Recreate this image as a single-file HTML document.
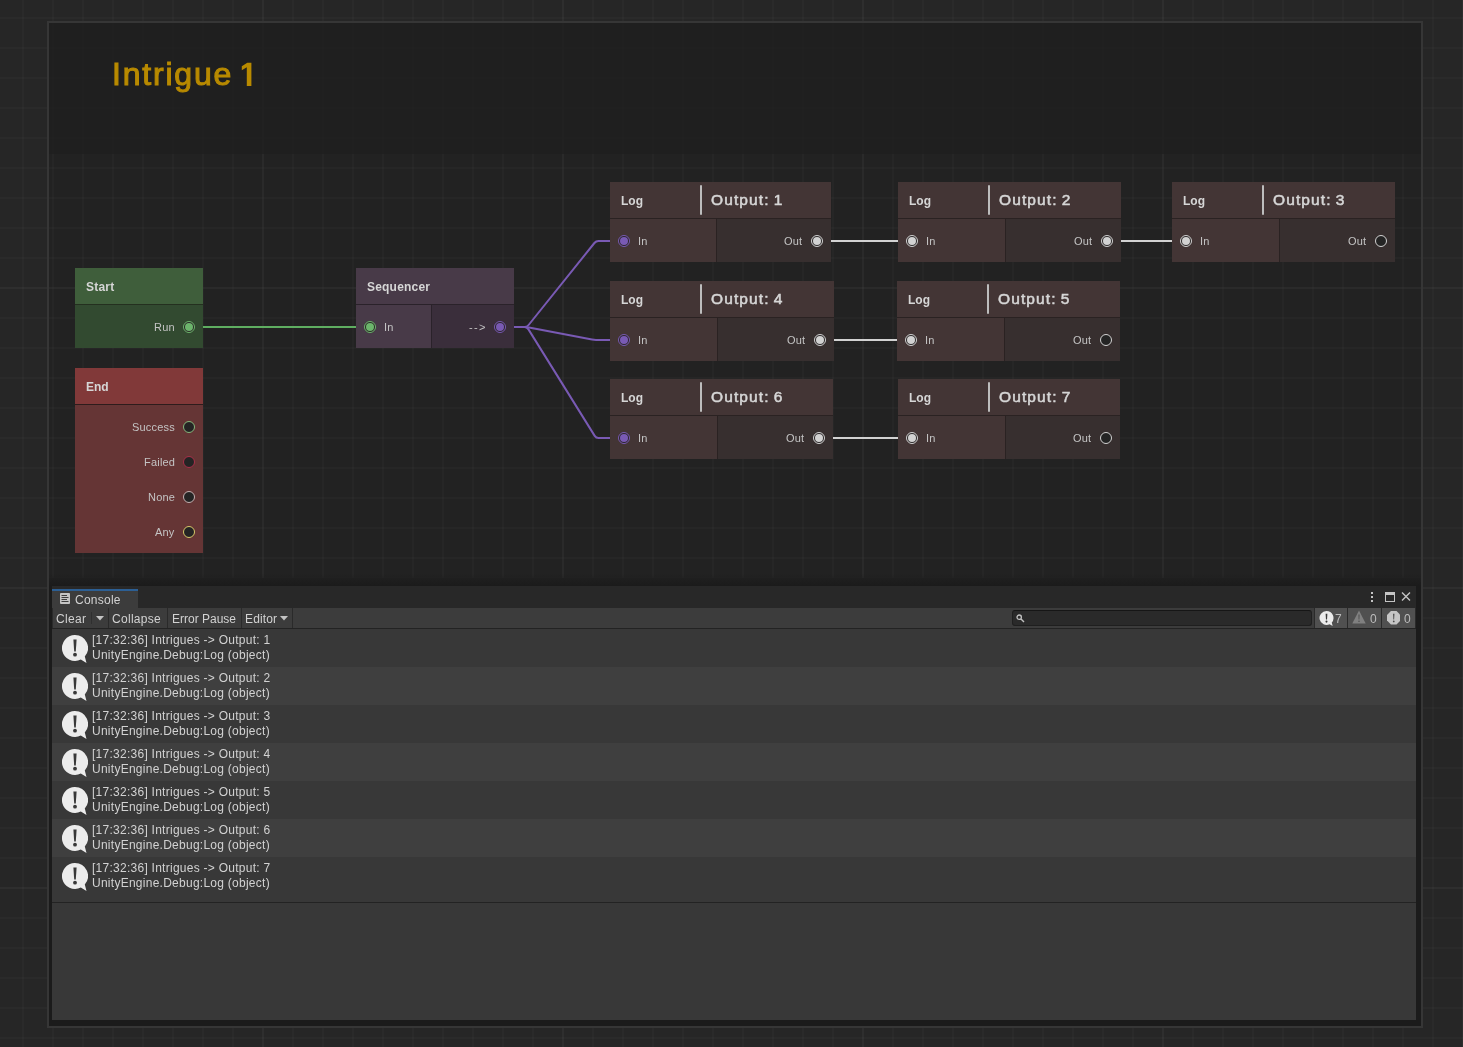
<!DOCTYPE html>
<html><head><meta charset="utf-8"><title>Intrigue 1</title>
<style>
*{margin:0;padding:0;box-sizing:border-box}
html,body{width:1463px;height:1047px;overflow:hidden;background:#262626}
body{position:relative;font-family:"Liberation Sans",sans-serif;color:#c8c8c8}
.abs,.abs *{position:absolute}
#grid{left:0;top:0;width:1463px;height:1047px;
 background-image:
  linear-gradient(to right,rgba(255,255,255,.020) 2px,transparent 2px),
  linear-gradient(to bottom,rgba(255,255,255,.020) 2px,transparent 2px),
  linear-gradient(to right,rgba(255,255,255,.020) 2px,transparent 2px),
  linear-gradient(to bottom,rgba(255,255,255,.020) 2px,transparent 2px);
 background-size:300px 300px,300px 300px,30px 30px,30px 30px;
 background-position:262px 0,0 287px,22px 0,0 17px;}
#group{left:47px;top:21px;width:1376px;height:1007px;border:2px solid #363636;background:rgba(0,0,0,.085)}
#ghead{left:49px;top:23px;width:1372px;height:130.5px;background:rgba(31,31,31,.86)}
#gtitle{will-change:transform;left:112.300px;top:51px;word-spacing:-3.500px;font-size:30.500px;font-weight:normal;color:#b88a00;-webkit-text-stroke:1px #b88a00;line-height:46px;white-space:nowrap;letter-spacing:1.700px;transform:scaleX(1.05);transform-origin:0 0}
.node{left:0;top:0;width:1463px;height:1047px}
.t{white-space:nowrap;will-change:transform}
.hd{font-weight:bold;font-size:12px;color:#d6d6d6;line-height:36px;margin-top:1px;letter-spacing:.2px}
.pl{font-size:11px;color:#c4c4c4;line-height:14px;letter-spacing:.2px}
.port{width:12px;height:12px;border-radius:50%;border:1px solid #ccc}
#shadow{left:49px;top:574px;width:1372px;height:452px;background:linear-gradient(to bottom,rgba(31,31,31,0) 0,rgba(31,31,31,.35) 3.500px,#1f1f1f 4.500px,#1b1b1b 12px)}
#con{left:52px;top:586px;width:1364px;height:434px;overflow:hidden}
.ct{font-size:12px;color:#d2d2d2;line-height:14px}
.port i{left:1px;top:1px;width:8px;height:8px;border-radius:50%;display:block}
</style></head>
<body>
<div id="grid" class="abs"></div>
<div id="group" class="abs"></div>
<div id="ghead" class="abs"></div>
<div id="gtitle" class="abs t">Intrigue</div>
<svg class="abs" style="left:238px;top:58px" width="18" height="32" viewBox="238 58 18 32"><path d="M251.400 62.800H247.300L241.800 66.200V70.200L246.800 67.200V86H251.400Z" fill="#b88a00"/></svg>
<svg class="abs" style="left:0;top:0" width="1463" height="1047" viewBox="0 0 1463 1047" fill="none" stroke-width="2" stroke-linejoin="round">
<path d="M203 327H356" stroke="#5fae61"/>
<path d="M514 327H524.500Q527 327 528.600 325L594.400 243Q596 241 598.500 241H610" stroke="#795ab4"/>
<path d="M514 327H525Q527 327 529 327.400L592 339.600Q594 340 596 340H610" stroke="#795ab4"/>
<path d="M514 327H524.500Q527 327 528.300 329.100L594.700 435.900Q596 438 598.500 438H610" stroke="#795ab4"/>
<path d="M831 241H898M1121 241H1172M834 340H897M833 438H898" stroke="#d2d2d2"/>
</svg>
<div class="abs node"><div style="left:75px;top:268px;width:128px;height:36px;background:#3f5e3b"></div><div style="left:75px;top:304px;width:128px;height:1px;background:#24301f"></div><div style="left:75px;top:305px;width:128px;height:43px;background:#324a30"></div><div class="t hd" style="left:86px;top:268px;">Start</div><div class="t pl" style="right:1288px;top:320px;">Run</div><div class="port" style="left:183px;top:321px;border-color:#6cb56c;background:#2a2627"><i style="background:#6cb56c"></i></div></div>
<div class="abs node"><div style="left:75px;top:368px;width:128px;height:36px;background:#813939"></div><div style="left:75px;top:404px;width:128px;height:1px;background:#2e1c1c"></div><div style="left:75px;top:405px;width:128px;height:148px;background:#653535"></div><div class="t hd" style="left:86px;top:368px;letter-spacing:-.100px">End</div><div class="t pl" style="right:1288px;top:420px;">Success</div><div class="port" style="left:183px;top:421px;border-color:#86b67c;background:#242424"></div><div class="t pl" style="right:1288px;top:455px;">Failed</div><div class="port" style="left:183px;top:456px;border-color:#a8304a;background:#242424"></div><div class="t pl" style="right:1288px;top:490px;">None</div><div class="port" style="left:183px;top:491px;border-color:#c4b0b0;background:#242424"></div><div class="t pl" style="right:1288px;top:525px;">Any</div><div class="port" style="left:183px;top:526px;border-color:#d6c86a;background:#242424"></div></div>
<div class="abs node"><div style="left:356px;top:268px;width:158px;height:36px;background:#483a48"></div><div style="left:356px;top:304px;width:158px;height:1px;background:#2a222a"></div><div style="left:356px;top:305px;width:75px;height:43px;background:#483a48"></div><div style="left:431px;top:305px;width:1px;height:43px;background:#2a222a"></div><div style="left:432px;top:305px;width:82px;height:43px;background:#3a2e3b"></div><div class="t hd" style="left:367px;top:268px;">Sequencer</div><div class="port" style="left:364px;top:321px;border-color:#6cb56c;background:#2a2627"><i style="background:#6cb56c"></i></div><div class="t pl" style="left:384px;top:320px;">In</div><div class="t pl" style="right:978px;top:320px;letter-spacing:1.300px;margin-right:-1.300px">--&gt;</div><div class="port" style="left:494px;top:321px;border-color:#795ab4;background:#2a2627"><i style="background:#795ab4"></i></div></div>
<div class="abs node"><div style="left:610px;top:182px;width:221px;height:36px;background:#433535"></div><div style="left:610px;top:218px;width:221px;height:1px;background:#2a2222"></div><div style="left:610px;top:219px;width:106px;height:43px;background:#433535"></div><div style="left:716px;top:219px;width:1px;height:43px;background:#2a2222"></div><div style="left:717px;top:219px;width:114px;height:43px;background:#372f2f"></div><div class="t hd" style="left:621px;top:182px;letter-spacing:0">Log</div><div style="left:700px;top:185px;width:2px;height:30px;background:#bdbdbd;border-radius:1px"></div><div class="t hd" style="left:710px;top:182px;font-size:15.500px;letter-spacing:1.100px;word-spacing:-1.300px;margin-top:0;left:710.5px;font-weight:normal;-webkit-text-stroke:.55px #d6d6d6">Output: 1</div><div class="port" style="left:618px;top:235px;border-color:#795ab4;background:#2a2627"><i style="background:#795ab4"></i></div><div class="t pl" style="left:638px;top:234px;">In</div><div class="t pl" style="right:660.7px;top:234px;">Out</div><div class="port" style="left:811px;top:235px;border-color:#d2d2d2;background:#2a2627"><i style="background:#d2d2d2"></i></div></div>
<div class="abs node"><div style="left:898px;top:182px;width:223px;height:36px;background:#433535"></div><div style="left:898px;top:218px;width:223px;height:1px;background:#2a2222"></div><div style="left:898px;top:219px;width:107px;height:43px;background:#433535"></div><div style="left:1005px;top:219px;width:1px;height:43px;background:#2a2222"></div><div style="left:1006px;top:219px;width:115px;height:43px;background:#372f2f"></div><div class="t hd" style="left:909px;top:182px;letter-spacing:0">Log</div><div style="left:988px;top:185px;width:2px;height:30px;background:#bdbdbd;border-radius:1px"></div><div class="t hd" style="left:998px;top:182px;font-size:15.500px;letter-spacing:1.100px;word-spacing:-1.300px;margin-top:0;left:998.5px;font-weight:normal;-webkit-text-stroke:.55px #d6d6d6">Output: 2</div><div class="port" style="left:906px;top:235px;border-color:#d2d2d2;background:#2a2627"><i style="background:#d2d2d2"></i></div><div class="t pl" style="left:926px;top:234px;">In</div><div class="t pl" style="right:370.70000000000005px;top:234px;">Out</div><div class="port" style="left:1101px;top:235px;border-color:#d2d2d2;background:#2a2627"><i style="background:#d2d2d2"></i></div></div>
<div class="abs node"><div style="left:1172px;top:182px;width:223px;height:36px;background:#433535"></div><div style="left:1172px;top:218px;width:223px;height:1px;background:#2a2222"></div><div style="left:1172px;top:219px;width:107px;height:43px;background:#433535"></div><div style="left:1279px;top:219px;width:1px;height:43px;background:#2a2222"></div><div style="left:1280px;top:219px;width:115px;height:43px;background:#372f2f"></div><div class="t hd" style="left:1183px;top:182px;letter-spacing:0">Log</div><div style="left:1262px;top:185px;width:2px;height:30px;background:#bdbdbd;border-radius:1px"></div><div class="t hd" style="left:1272px;top:182px;font-size:15.500px;letter-spacing:1.100px;word-spacing:-1.300px;margin-top:0;left:1272.5px;font-weight:normal;-webkit-text-stroke:.55px #d6d6d6">Output: 3</div><div class="port" style="left:1180px;top:235px;border-color:#d2d2d2;background:#2a2627"><i style="background:#d2d2d2"></i></div><div class="t pl" style="left:1200px;top:234px;">In</div><div class="t pl" style="right:96.70000000000005px;top:234px;">Out</div><div class="port" style="left:1375px;top:235px;border-color:#d2d2d2;background:#242424"></div></div>
<div class="abs node"><div style="left:610px;top:281px;width:224px;height:36px;background:#433535"></div><div style="left:610px;top:317px;width:224px;height:1px;background:#2a2222"></div><div style="left:610px;top:318px;width:107px;height:43px;background:#433535"></div><div style="left:717px;top:318px;width:1px;height:43px;background:#2a2222"></div><div style="left:718px;top:318px;width:116px;height:43px;background:#372f2f"></div><div class="t hd" style="left:621px;top:281px;letter-spacing:0">Log</div><div style="left:700px;top:284px;width:2px;height:30px;background:#bdbdbd;border-radius:1px"></div><div class="t hd" style="left:710px;top:281px;font-size:15.500px;letter-spacing:1.100px;word-spacing:-1.300px;margin-top:0;left:710.5px;font-weight:normal;-webkit-text-stroke:.55px #d6d6d6">Output: 4</div><div class="port" style="left:618px;top:334px;border-color:#795ab4;background:#2a2627"><i style="background:#795ab4"></i></div><div class="t pl" style="left:638px;top:333px;">In</div><div class="t pl" style="right:657.7px;top:333px;">Out</div><div class="port" style="left:814px;top:334px;border-color:#d2d2d2;background:#2a2627"><i style="background:#d2d2d2"></i></div></div>
<div class="abs node"><div style="left:897px;top:281px;width:223px;height:36px;background:#433535"></div><div style="left:897px;top:317px;width:223px;height:1px;background:#2a2222"></div><div style="left:897px;top:318px;width:107px;height:43px;background:#433535"></div><div style="left:1004px;top:318px;width:1px;height:43px;background:#2a2222"></div><div style="left:1005px;top:318px;width:115px;height:43px;background:#372f2f"></div><div class="t hd" style="left:908px;top:281px;letter-spacing:0">Log</div><div style="left:987px;top:284px;width:2px;height:30px;background:#bdbdbd;border-radius:1px"></div><div class="t hd" style="left:997px;top:281px;font-size:15.500px;letter-spacing:1.100px;word-spacing:-1.300px;margin-top:0;left:997.5px;font-weight:normal;-webkit-text-stroke:.55px #d6d6d6">Output: 5</div><div class="port" style="left:905px;top:334px;border-color:#d2d2d2;background:#2a2627"><i style="background:#d2d2d2"></i></div><div class="t pl" style="left:925px;top:333px;">In</div><div class="t pl" style="right:371.70000000000005px;top:333px;">Out</div><div class="port" style="left:1100px;top:334px;border-color:#d2d2d2;background:#242424"></div></div>
<div class="abs node"><div style="left:610px;top:379px;width:223px;height:36px;background:#433535"></div><div style="left:610px;top:415px;width:223px;height:1px;background:#2a2222"></div><div style="left:610px;top:416px;width:107px;height:43px;background:#433535"></div><div style="left:717px;top:416px;width:1px;height:43px;background:#2a2222"></div><div style="left:718px;top:416px;width:115px;height:43px;background:#372f2f"></div><div class="t hd" style="left:621px;top:379px;letter-spacing:0">Log</div><div style="left:700px;top:382px;width:2px;height:30px;background:#bdbdbd;border-radius:1px"></div><div class="t hd" style="left:710px;top:379px;font-size:15.500px;letter-spacing:1.100px;word-spacing:-1.300px;margin-top:0;left:710.5px;font-weight:normal;-webkit-text-stroke:.55px #d6d6d6">Output: 6</div><div class="port" style="left:618px;top:432px;border-color:#795ab4;background:#2a2627"><i style="background:#795ab4"></i></div><div class="t pl" style="left:638px;top:431px;">In</div><div class="t pl" style="right:658.7px;top:431px;">Out</div><div class="port" style="left:813px;top:432px;border-color:#d2d2d2;background:#2a2627"><i style="background:#d2d2d2"></i></div></div>
<div class="abs node"><div style="left:898px;top:379px;width:222px;height:36px;background:#433535"></div><div style="left:898px;top:415px;width:222px;height:1px;background:#2a2222"></div><div style="left:898px;top:416px;width:107px;height:43px;background:#433535"></div><div style="left:1005px;top:416px;width:1px;height:43px;background:#2a2222"></div><div style="left:1006px;top:416px;width:114px;height:43px;background:#372f2f"></div><div class="t hd" style="left:909px;top:379px;letter-spacing:0">Log</div><div style="left:988px;top:382px;width:2px;height:30px;background:#bdbdbd;border-radius:1px"></div><div class="t hd" style="left:998px;top:379px;font-size:15.500px;letter-spacing:1.100px;word-spacing:-1.300px;margin-top:0;left:998.5px;font-weight:normal;-webkit-text-stroke:.55px #d6d6d6">Output: 7</div><div class="port" style="left:906px;top:432px;border-color:#d2d2d2;background:#2a2627"><i style="background:#d2d2d2"></i></div><div class="t pl" style="left:926px;top:431px;">In</div><div class="t pl" style="right:371.70000000000005px;top:431px;">Out</div><div class="port" style="left:1100px;top:432px;border-color:#d2d2d2;background:#242424"></div></div>
<div id="shadow" class="abs"></div>
<div id="con" class="abs">
<div style="left:0px;top:0px;width:1364px;height:22px;background:#282828"></div><div style="left:0px;top:3px;width:86px;height:19px;background:#3c3c3c"></div><div style="left:0px;top:3px;width:86px;height:2px;background:#2c5f94"></div><svg style="left:8px;top:7px" width="11" height="11" viewBox="0 0 11 11"><rect x="0" y="0" width="10" height="11" rx="1" fill="#c4c4c4"/><path d="M1.5 2.5H7M1.5 4.5H8.5M1.5 6.5H7M1.5 8.5H8.5" stroke="#3c3c3c" stroke-width="1"/></svg><div class="t ct" style="left:23px;top:7px;letter-spacing:.250px">Console</div><svg style="left:1316px;top:5px" width="44" height="12" viewBox="0 0 44 12" fill="#c4c4c4"><rect x="3" y="1" width="2" height="2"/><rect x="3" y="5" width="2" height="2"/><rect x="3" y="9" width="2" height="2"/><path d="M17 1h10v10h-10z M18 4v6h8v-6z" fill-rule="evenodd"/><path d="M34 1.5L42 9.500M42 1.500L34 9.500" stroke="#c4c4c4" stroke-width="1.4" fill="none"/></svg><div style="left:0px;top:22px;width:1364px;height:20px;background:#3c3c3c"></div><div style="left:0px;top:42px;width:1364px;height:1px;background:#232323"></div><div style="left:56px;top:22px;width:1px;height:20px;background:#2a2a2a"></div><div style="left:115px;top:22px;width:1px;height:20px;background:#2a2a2a"></div><div style="left:189px;top:22px;width:1px;height:20px;background:#2a2a2a"></div><div style="left:240px;top:22px;width:1px;height:20px;background:#2a2a2a"></div><div style="left:39px;top:26px;width:1px;height:12px;background:#2f2f2f"></div><div style="left:0px;top:22px;width:1px;height:20px;background:#2a2a2a"></div><div class="t ct" style="left:4px;top:26px;letter-spacing:.300px">Clear</div><div class="t ct" style="left:60px;top:26px;letter-spacing:.300px">Collapse</div><div class="t ct" style="left:120px;top:26px;">Error Pause</div><div class="t ct" style="left:193px;top:26px;letter-spacing:.150px">Editor</div><svg style="left:44px;top:30px" width="8" height="5"><path d="M0 0H8L4 4.500z" fill="#c4c4c4"/></svg><svg style="left:228px;top:30px" width="8" height="5"><path d="M0 0H8L4 4.500z" fill="#c4c4c4"/></svg><div style="left:960px;top:24px;width:300px;height:16px;background:#2a2a2a;border:1px solid #1f1f1f;border-top-color:#161616;border-radius:3px"></div><svg style="left:964px;top:28px" width="9" height="9" viewBox="0 0 9 9" fill="none" stroke="#c0c0c0"><circle cx="3.200" cy="3.200" r="2.200" stroke-width="1.300"/><path d="M5 5L8 8" stroke-width="1.400"/></svg><div style="left:1263px;top:22px;width:32px;height:20px;background:#505050"></div><div style="left:1296px;top:22px;width:33px;height:20px;background:#505050"></div><div style="left:1330px;top:22px;width:33px;height:20px;background:#505050"></div><div style="left:1262px;top:22px;width:1px;height:20px;background:#2a2a2a"></div><div style="left:1295px;top:22px;width:1px;height:20px;background:#2a2a2a"></div><div style="left:1329px;top:22px;width:1px;height:20px;background:#2a2a2a"></div><div style="left:1363px;top:22px;width:1px;height:20px;background:#2a2a2a"></div><svg style="left:1267px;top:25px" width="15" height="15" viewBox="0 0 26 28"><g fill="#ececec"><path d="M13 0a13 13 0 1 0 5.800 24.600L24.500 28l-1.700-6.500A13 13 0 0 0 13 0z"/></g><path d="M11.400 5h3.200l-.6 11h-2z" fill="#3a3a3a"/><circle cx="13" cy="19.800" r="1.900" fill="#3a3a3a"/></svg><div class="t ct" style="left:1283px;top:26px;color:#bdbdbd">7</div><svg style="left:1300.300px;top:24px" width="14" height="14" viewBox="0 0 14 14"><path d="M7 .5L13.700 13.500H.3z" fill="#808080"/><path d="M6.400 4.500h1.200l-.2 5h-.8z" fill="#505050"/><circle cx="7" cy="11.200" r=".8" fill="#505050"/></svg><div class="t ct" style="left:1317.8px;top:26px;color:#bdbdbd">0</div><svg style="left:1334.500px;top:25px" width="13.500" height="13.500" viewBox="0 0 14 14"><path d="M4.100 0h5.800L14 4.100v5.800L9.900 14H4.100L0 9.900V4.100z" fill="#c6c6c6"/><path d="M6.300 2.800h1.400l-.3 6h-.8z" fill="#4a4a4a"/><circle cx="7" cy="10.800" r=".9" fill="#4a4a4a"/></svg><div class="t ct" style="left:1351.8px;top:26px;color:#bdbdbd">0</div><div style="left:0px;top:43px;width:1364px;height:38px;background:#383838"></div><svg style="left:10px;top:49px" width="26" height="29" viewBox="0 0 26 29"><g fill="#ececec"><path d="M13 0a13 13 0 1 0 5.800 24.600L24.500 28l-1.700-6.500A13 13 0 0 0 13 0z"/></g><path d="M11.400 4.600h3.200l-.8 11.800h-1.600z" fill="#383838"/><circle cx="13" cy="19.700" r="1.900" fill="#383838"/></svg><div class="t ct" style="left:40px;top:47px;letter-spacing:.260px">[17:32:36] Intrigues -&gt; Output: 1</div><div class="t ct" style="left:40px;top:62px;letter-spacing:.260px">UnityEngine.Debug:Log (object)</div><div style="left:0px;top:81px;width:1364px;height:38px;background:#3f3f3f"></div><svg style="left:10px;top:87px" width="26" height="29" viewBox="0 0 26 29"><g fill="#ececec"><path d="M13 0a13 13 0 1 0 5.800 24.600L24.500 28l-1.700-6.500A13 13 0 0 0 13 0z"/></g><path d="M11.400 4.600h3.200l-.8 11.800h-1.600z" fill="#383838"/><circle cx="13" cy="19.700" r="1.900" fill="#383838"/></svg><div class="t ct" style="left:40px;top:85px;letter-spacing:.260px">[17:32:36] Intrigues -&gt; Output: 2</div><div class="t ct" style="left:40px;top:100px;letter-spacing:.260px">UnityEngine.Debug:Log (object)</div><div style="left:0px;top:119px;width:1364px;height:38px;background:#383838"></div><svg style="left:10px;top:125px" width="26" height="29" viewBox="0 0 26 29"><g fill="#ececec"><path d="M13 0a13 13 0 1 0 5.800 24.600L24.500 28l-1.700-6.500A13 13 0 0 0 13 0z"/></g><path d="M11.400 4.600h3.200l-.8 11.800h-1.600z" fill="#383838"/><circle cx="13" cy="19.700" r="1.900" fill="#383838"/></svg><div class="t ct" style="left:40px;top:123px;letter-spacing:.260px">[17:32:36] Intrigues -&gt; Output: 3</div><div class="t ct" style="left:40px;top:138px;letter-spacing:.260px">UnityEngine.Debug:Log (object)</div><div style="left:0px;top:157px;width:1364px;height:38px;background:#3f3f3f"></div><svg style="left:10px;top:163px" width="26" height="29" viewBox="0 0 26 29"><g fill="#ececec"><path d="M13 0a13 13 0 1 0 5.800 24.600L24.500 28l-1.700-6.500A13 13 0 0 0 13 0z"/></g><path d="M11.400 4.600h3.200l-.8 11.800h-1.600z" fill="#383838"/><circle cx="13" cy="19.700" r="1.900" fill="#383838"/></svg><div class="t ct" style="left:40px;top:161px;letter-spacing:.260px">[17:32:36] Intrigues -&gt; Output: 4</div><div class="t ct" style="left:40px;top:176px;letter-spacing:.260px">UnityEngine.Debug:Log (object)</div><div style="left:0px;top:195px;width:1364px;height:38px;background:#383838"></div><svg style="left:10px;top:201px" width="26" height="29" viewBox="0 0 26 29"><g fill="#ececec"><path d="M13 0a13 13 0 1 0 5.800 24.600L24.500 28l-1.700-6.500A13 13 0 0 0 13 0z"/></g><path d="M11.400 4.600h3.200l-.8 11.800h-1.600z" fill="#383838"/><circle cx="13" cy="19.700" r="1.900" fill="#383838"/></svg><div class="t ct" style="left:40px;top:199px;letter-spacing:.260px">[17:32:36] Intrigues -&gt; Output: 5</div><div class="t ct" style="left:40px;top:214px;letter-spacing:.260px">UnityEngine.Debug:Log (object)</div><div style="left:0px;top:233px;width:1364px;height:38px;background:#3f3f3f"></div><svg style="left:10px;top:239px" width="26" height="29" viewBox="0 0 26 29"><g fill="#ececec"><path d="M13 0a13 13 0 1 0 5.800 24.600L24.500 28l-1.700-6.500A13 13 0 0 0 13 0z"/></g><path d="M11.400 4.600h3.200l-.8 11.800h-1.600z" fill="#383838"/><circle cx="13" cy="19.700" r="1.900" fill="#383838"/></svg><div class="t ct" style="left:40px;top:237px;letter-spacing:.260px">[17:32:36] Intrigues -&gt; Output: 6</div><div class="t ct" style="left:40px;top:252px;letter-spacing:.260px">UnityEngine.Debug:Log (object)</div><div style="left:0px;top:271px;width:1364px;height:38px;background:#383838"></div><svg style="left:10px;top:277px" width="26" height="29" viewBox="0 0 26 29"><g fill="#ececec"><path d="M13 0a13 13 0 1 0 5.800 24.600L24.500 28l-1.700-6.500A13 13 0 0 0 13 0z"/></g><path d="M11.400 4.600h3.200l-.8 11.800h-1.600z" fill="#383838"/><circle cx="13" cy="19.700" r="1.900" fill="#383838"/></svg><div class="t ct" style="left:40px;top:275px;letter-spacing:.260px">[17:32:36] Intrigues -&gt; Output: 7</div><div class="t ct" style="left:40px;top:290px;letter-spacing:.260px">UnityEngine.Debug:Log (object)</div><div style="left:0px;top:309px;width:1364px;height:7px;background:#383838"></div><div style="left:0px;top:316px;width:1364px;height:1px;background:#232323"></div><div style="left:0px;top:317px;width:1364px;height:117px;background:#383838"></div></div>
</body></html>
